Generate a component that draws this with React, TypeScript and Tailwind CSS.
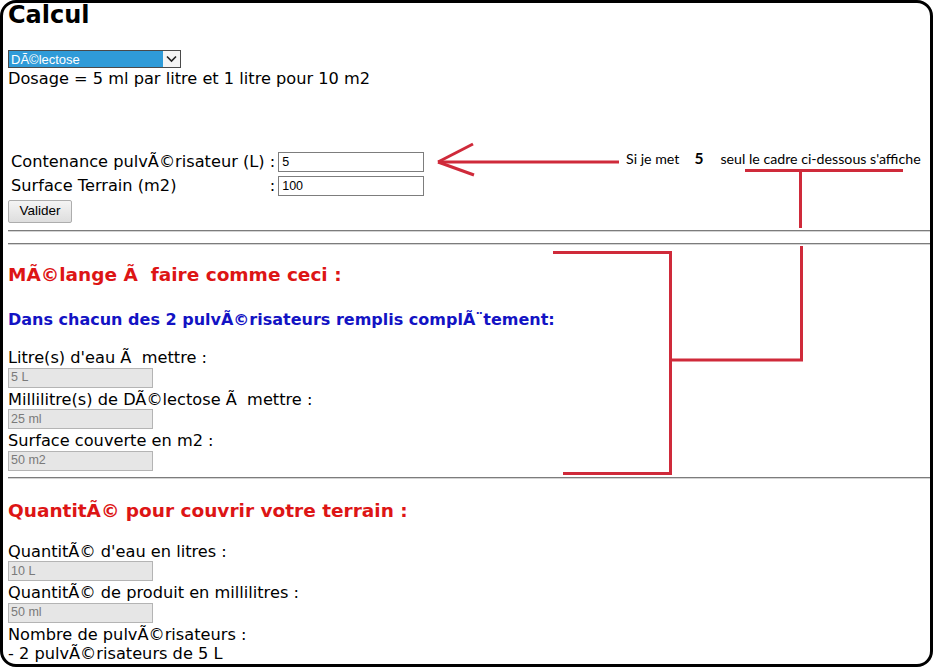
import React from "react";

const Label = ({ children }: { children: React.ReactNode }) => (
  <div className="leading-[19.5px] whitespace-pre">{children}</div>
);

const Out = ({ value }: { value: string }) => (
  <div className="mb-[2px] flex h-[20px] w-[145px] items-center border border-[#b4b4b4] bg-[#e6e6e6] pl-[2px] font-['Liberation_Sans',Arial,sans-serif] text-[12.5px] text-[#7a7a7a]">
    {value}
  </div>
);

const In = ({ value }: { value: string }) => (
  <div className="flex h-[20px] w-[146px] items-center border border-[#7d7d7d] bg-white pl-[3px] font-['Liberation_Sans',Arial,sans-serif] text-[12.5px] text-black">
    {value}
  </div>
);

export default function App() {
  return (
    <div className="relative h-[671px] w-[935px] overflow-hidden bg-white">
      <div className="h-[667px] w-[933px] overflow-hidden rounded-[16px] border-[3px] border-black pl-[5px] font-['DejaVu_Sans',Verdana,sans-serif] text-[16.2px] text-black">
        <h1 className="text-[24px] font-bold leading-[24px]">Calcul</h1>

        <div className="mt-[23px] flex h-[18px] w-[173px] border border-[#4a4a4a] bg-white">
          <div className="flex flex-1 items-center bg-[#2f9bd8] pl-[2px] font-['Liberation_Sans',Arial,sans-serif] text-[13px] leading-none text-white">
            DÃ©lectose
          </div>
          <div className="flex w-[17px] items-center justify-center bg-[#f4f4f4]">
            <svg width="11" height="8" viewBox="0 0 11 8">
              <path d="M1 1.5 L5.5 6 L10 1.5" fill="none" stroke="#222" strokeWidth="1.6" />
            </svg>
          </div>
        </div>
        <p className="mt-[1px] leading-[19px]">Dosage = 5 ml par litre et 1 litre pour 10 m2</p>

        <div className="mt-[62px] grid w-fit grid-cols-[auto_auto] gap-x-[3px] pl-[3px]">
          <div className="flex h-[24px] items-center whitespace-pre">Contenance pulvÃ©risateur (L) :</div>
          <div className="flex h-[24px] items-center">
            <In value="5" />
          </div>
          <div className="flex h-[24px] items-center justify-between whitespace-pre">
            <span>Surface Terrain (m2)</span>
            <span>:</span>
          </div>
          <div className="flex h-[24px] items-center">
            <In value="100" />
          </div>
        </div>
        <button className="mt-[2px] flex h-[23px] w-[64px] items-center justify-center rounded-[2px] border border-[#adadad] bg-gradient-to-b from-[#f4f4f4] to-[#dedede] font-['Liberation_Sans',Arial,sans-serif] text-[13.5px] text-black">
          Valider
        </button>

        <div className="mt-[7px] h-[1px] bg-[#7c7c7c]" />
        <div className="h-[1px] bg-[#d4d4d4]" />
        <div className="mt-[11px] h-[1px] bg-[#7c7c7c]" />
        <div className="h-[1px] bg-[#d4d4d4]" />

        <h2 className="mt-[19px] text-[18.5px] font-bold leading-[22px] text-[#dd1515]">MÃ©lange Ã{"\u00a0"} faire comme ceci :</h2>
        <h3 className="mt-[24px] text-[16px] font-bold leading-[19px] text-[#1313c4]">
          Dans chacun des 2 pulvÃ©risateurs remplis complÃ¨tement:
        </h3>

        <div className="mt-[19px]">
          <Label>Litre(s) d'eau Ã{"\u00a0"} mettre :</Label>
          <Out value="5 L" />
          <Label>Millilitre(s) de DÃ©lectose Ã{"\u00a0"} mettre :</Label>
          <Out value="25 ml" />
          <Label>Surface couverte en m2 :</Label>
          <Out value="50 m2" />
        </div>

        <div className="mt-[6px] h-[1px] bg-[#7c7c7c]" />
        <div className="h-[1px] bg-[#d4d4d4]" />

        <h2 className="mt-[21px] text-[18.5px] font-bold leading-[22px] text-[#dd1515]">QuantitÃ© pour couvrir votre terrain :</h2>

        <div className="mt-[20px]">
          <Label>QuantitÃ© d'eau en litres :</Label>
          <Out value="10 L" />
          <Label>QuantitÃ© de produit en millilitres :</Label>
          <Out value="50 ml" />
          <Label>Nombre de pulvÃ©risateurs :</Label>
          <Label>- 2 pulvÃ©risateurs de 5 L</Label>
        </div>
      </div>

      {/* annotation overlay */}
      <div className="pointer-events-none absolute inset-0">
        <svg width="935" height="671" className="absolute left-0 top-0">
          <g fill="none" stroke="#cf2a3a" strokeWidth="3" strokeLinecap="butt">
            <path d="M438 162 H619" />
            <path d="M438 162 L473 144" />
            <path d="M438 162 L474 175" />
            <path d="M745 170.5 H903" />
            <path d="M800.5 170 V228" />
            <path d="M801.5 246 V361" />
            <path d="M670 360 H803" />
            <path d="M553 252.5 H670.5 V473.5 H563" />
          </g>
        </svg>
        <div className="absolute left-[626px] top-[149px] flex items-baseline font-['Lato',sans-serif] text-[14.2px] leading-[18px] text-black">
          <span>Si je met</span>
          <span className="ml-[15px] text-[15.5px] font-bold">5</span>
          <span className="ml-[17px]">seul le cadre ci-dessous s'affiche</span>
        </div>
      </div>
    </div>
  );
}
